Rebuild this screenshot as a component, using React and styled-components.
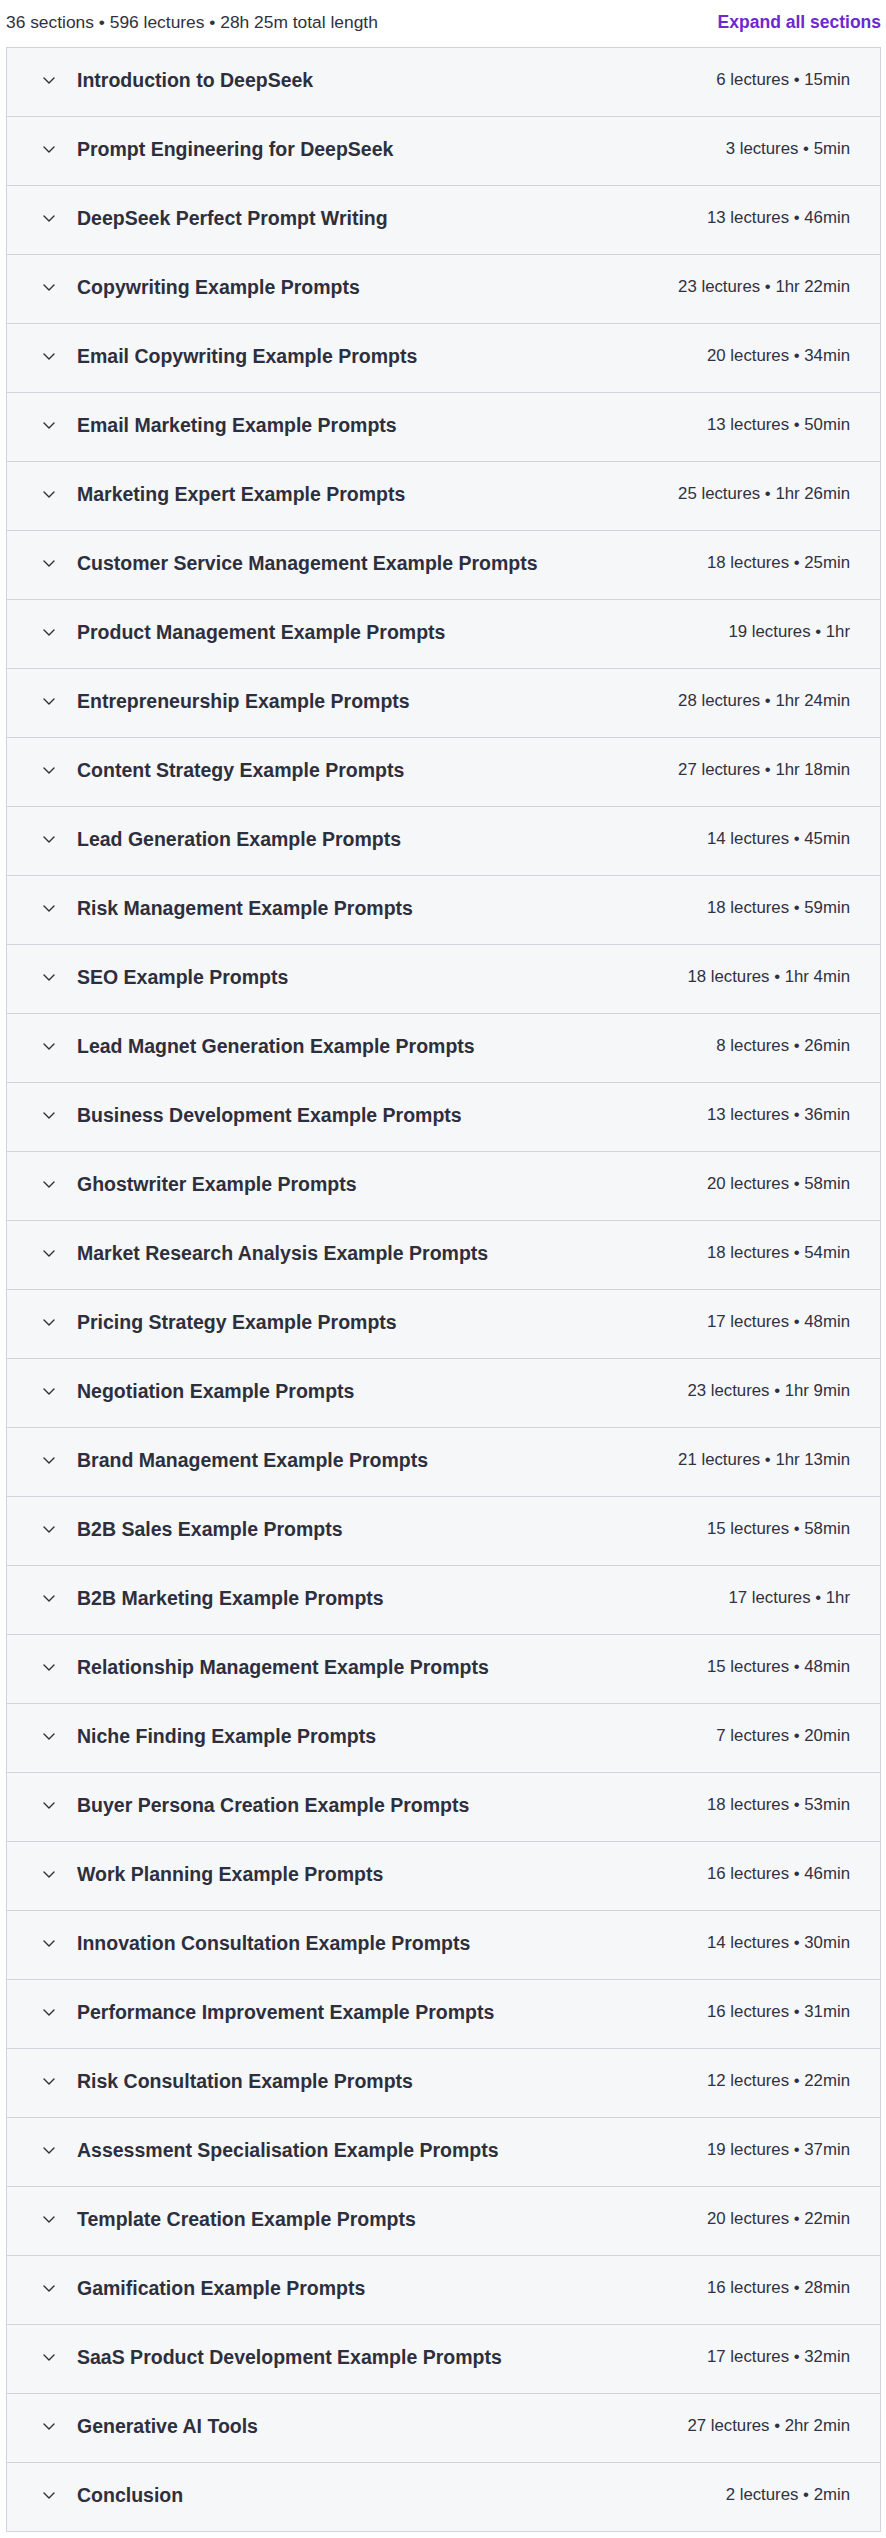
import React from "react";
import styled, { createGlobalStyle } from "styled-components";

const GlobalStyle = createGlobalStyle`
  body {
    margin: 0;
    background: #fff;
    font-family: "Liberation Sans", Arial, sans-serif;
    color: #303141;
  }
`;

const sections = [
  ["Introduction to DeepSeek", 6, "15min"],
  ["Prompt Engineering for DeepSeek", 3, "5min"],
  ["DeepSeek Perfect Prompt Writing", 13, "46min"],
  ["Copywriting Example Prompts", 23, "1hr 22min"],
  ["Email Copywriting Example Prompts", 20, "34min"],
  ["Email Marketing Example Prompts", 13, "50min"],
  ["Marketing Expert Example Prompts", 25, "1hr 26min"],
  ["Customer Service Management Example Prompts", 18, "25min"],
  ["Product Management Example Prompts", 19, "1hr"],
  ["Entrepreneurship Example Prompts", 28, "1hr 24min"],
  ["Content Strategy Example Prompts", 27, "1hr 18min"],
  ["Lead Generation Example Prompts", 14, "45min"],
  ["Risk Management Example Prompts", 18, "59min"],
  ["SEO Example Prompts", 18, "1hr 4min"],
  ["Lead Magnet Generation Example Prompts", 8, "26min"],
  ["Business Development Example Prompts", 13, "36min"],
  ["Ghostwriter Example Prompts", 20, "58min"],
  ["Market Research Analysis Example Prompts", 18, "54min"],
  ["Pricing Strategy Example Prompts", 17, "48min"],
  ["Negotiation Example Prompts", 23, "1hr 9min"],
  ["Brand Management Example Prompts", 21, "1hr 13min"],
  ["B2B Sales Example Prompts", 15, "58min"],
  ["B2B Marketing Example Prompts", 17, "1hr"],
  ["Relationship Management Example Prompts", 15, "48min"],
  ["Niche Finding Example Prompts", 7, "20min"],
  ["Buyer Persona Creation Example Prompts", 18, "53min"],
  ["Work Planning Example Prompts", 16, "46min"],
  ["Innovation Consultation Example Prompts", 14, "30min"],
  ["Performance Improvement Example Prompts", 16, "31min"],
  ["Risk Consultation Example Prompts", 12, "22min"],
  ["Assessment Specialisation Example Prompts", 19, "37min"],
  ["Template Creation Example Prompts", 20, "22min"],
  ["Gamification Example Prompts", 16, "28min"],
  ["SaaS Product Development Example Prompts", 17, "32min"],
  ["Generative AI Tools", 27, "2hr 2min"],
  ["Conclusion", 2, "2min"],
];

const Curriculum = styled.div`
  padding: 0 5px 0 6px;
`;

const Summary = styled.div`
  display: flex;
  justify-content: space-between;
  align-items: baseline;
  padding: 10px 0 13px;
  line-height: 24px;

  span {
    font-size: 17.4px;
    color: #303141;
  }

  button {
    border: 0;
    background: none;
    padding: 0;
    font-family: inherit;
    font-size: 17.5px;
    font-weight: 700;
    line-height: 24px;
    color: #6d28d2;
    cursor: pointer;
  }
`;

const Panel = styled.div`
  border: 1px solid #d1d2e0;
  background: #f6f7f9;
`;

/* 68px of content per section, plus a 1px divider above every section but the first */
const SectionRow = styled.div`
  display: flex;
  align-items: center;
  height: 68px;
  box-sizing: content-box;
  padding: 0 30px 0 36px;
  border-top: ${(p) => (p.$first ? "none" : "1px solid #d1d2e0")};
  cursor: pointer;

  > * {
    position: relative;
    top: -2px;
  }
`;

const Chevron = styled.svg`
  flex: none;
  width: 12px;
  height: 7px;
  margin-right: 22px;
`;

const Title = styled.h3`
  flex: 1;
  margin: 0;
  font-size: 19.5px;
  font-weight: 700;
  line-height: 24px;
  color: #2d2f3d;
`;

const Meta = styled.span`
  flex: none;
  font-size: 16.8px;
  line-height: 24px;
  color: #303141;
`;

function Section({ title, lectures, length, first }) {
  return (
    <SectionRow $first={first}>
      <Chevron viewBox="0 0 12 7" fill="none">
        <path
          d="M1 1l5 5 5-5"
          stroke="#2d2f31"
          strokeWidth="1.4"
          strokeLinecap="round"
          strokeLinejoin="round"
        />
      </Chevron>
      <Title>{title}</Title>
      <Meta>
        {lectures} lectures • {length}
      </Meta>
    </SectionRow>
  );
}

export default function App() {
  return (
    <>
      <GlobalStyle />
      <Curriculum>
        <Summary>
          <span>36 sections • 596 lectures • 28h 25m total length</span>
          <button type="button">Expand all sections</button>
        </Summary>
        <Panel>
          {sections.map(([title, lectures, length], i) => (
            <Section
              key={title}
              title={title}
              lectures={lectures}
              length={length}
              first={i === 0}
            />
          ))}
        </Panel>
      </Curriculum>
    </>
  );
}
